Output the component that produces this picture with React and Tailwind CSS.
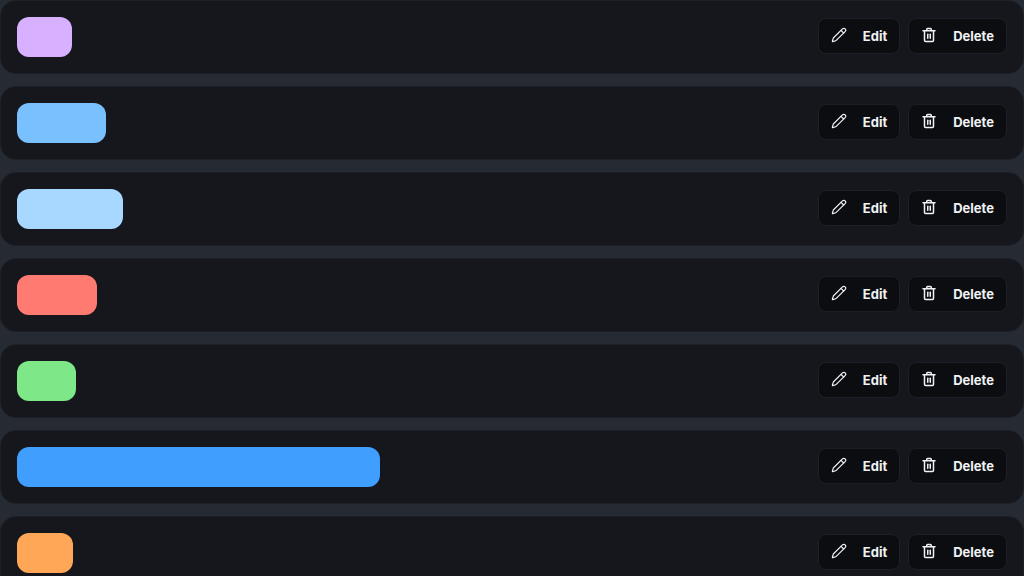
import { Pencil } from 'lucide-react';

const rows = [
  { id: 1, color: 'bg-[#d7b0ff]', width: 'w-[55px]' },
  { id: 2, color: 'bg-[#79c0ff]', width: 'w-[89px]' },
  { id: 3, color: 'bg-[#a8d8ff]', width: 'w-[106px]' },
  { id: 4, color: 'bg-[#ff7b72]', width: 'w-[80px]' },
  { id: 5, color: 'bg-[#7ee787]', width: 'w-[59px]' },
  { id: 6, color: 'bg-[#409eff]', width: 'w-[363px]' },
  { id: 7, color: 'bg-[#ffa657]', width: 'w-[56px]' },
];

// straight-sided bin, lucide's tapers too much
function TrashIcon({ className }) {
  return (
    <svg width="16" height="16" viewBox="0 0 16 16" fill="none" stroke="currentColor"
      strokeWidth="1.5" strokeLinecap="round" strokeLinejoin="round" className={className}>
      <path d="M2 3.75h12" />
      <path d="M5.75 3.5V2.25a.75.75 0 0 1 .75-.75h3a.75.75 0 0 1 .75.75V3.5" />
      <path d="M3.5 4v9.5a1 1 0 0 0 1 1h7a1 1 0 0 0 1-1V4" />
      <path d="M6.75 7.25v4" />
      <path d="M9.25 7.25v4" />
    </svg>
  );
}

function ActionButton({ icon: Icon, label }) {
  return (
    <button className="flex h-9 items-center gap-4 rounded-lg border border-[#1c1f27] bg-[#0c0d10] px-3 text-[13px] font-bold text-[#f0f2f5]">
      <Icon size={16} strokeWidth={1.75} className="-translate-y-px" />
      <span className="translate-y-px">{label}</span>
    </button>
  );
}

export default function App() {
  return (
    <div className="flex h-[576px] flex-col gap-3 overflow-hidden bg-[#262a33] font-['Inter',sans-serif]">
      {rows.map(r => (
        <div key={r.id}
          className="flex shrink-0 items-center justify-between rounded-2xl border border-[#1c1f26] bg-[#15171c] p-4">
          <div className={`h-10 rounded-xl ${r.color} ${r.width}`} />
          <div className="mb-[2px] flex gap-2">
            <ActionButton icon={Pencil} label="Edit" />
            <ActionButton icon={TrashIcon} label="Delete" />
          </div>
        </div>
      ))}
    </div>
  );
}
